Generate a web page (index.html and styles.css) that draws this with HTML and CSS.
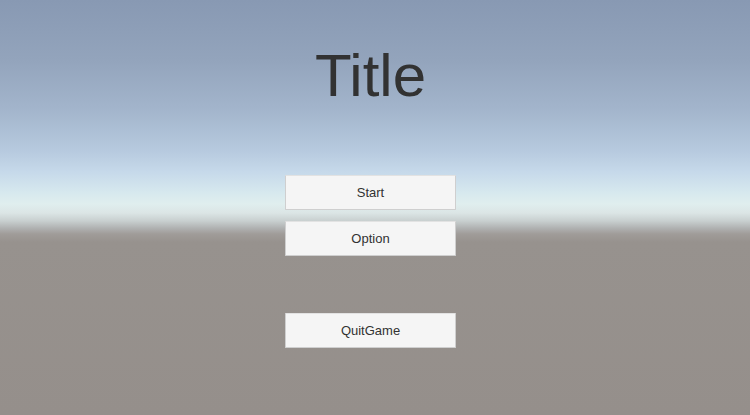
FILE: index.html
```html
<!DOCTYPE html>
<html>
<head>
<meta charset="utf-8">
<link rel="stylesheet" href="styles.css">
</head>
<body>
<div class="scene">
  <div class="menu">
    <div class="title">Title</div>
    <div class="buttons">
      <button class="btn">Start</button>
      <button class="btn btn-gap">Option</button>
      <button class="btn btn-quit">QuitGame</button>
    </div>
  </div>
</div>
</body>
</html>
```
FILE: styles.css
```css
html, body {
  margin: 0;
  padding: 0;
  width: 750px;
  height: 415px;
  overflow: hidden;
}
.scene {
  width: 750px;
  height: 415px;
  background: linear-gradient(to bottom,
    #8899b3 0px,
    #93a4bc 60px,
    #a3b5cc 110px,
    #b6c9de 150px,
    #c6d9ea 172px,
    #d6e8ee 192px,
    #e0eeee 204px,
    #dbe5e5 213px,
    #c8cfcf 221px,
    #b0b2b2 228px,
    #a09c99 234px,
    #97928e 242px,
    #958f8b 415px);
  font-family: "Liberation Sans", Arial, sans-serif;
  color: #323232;
}
.menu {
  display: flex;
  flex-direction: column;
  align-items: center;
  padding-right: 9px;
}
.title {
  margin-top: 41px;
  font-size: 60px;
  line-height: 70px;
  height: 70px;
}
.buttons {
  display: flex;
  flex-direction: column;
  margin-top: 64px;
}
.btn {
  width: 171px;
  height: 35px;
  background: #f5f5f5;
  border: 1px solid #cfcfcf;
  border-top-color: #e2e2e2;
  border-radius: 1px;
  font-family: "Liberation Sans", Arial, sans-serif;
  font-size: 13px;
  color: #323232;
  padding: 0;
  margin: 0;
}
.btn-gap {
  margin-top: 11px;
}
.btn-quit {
  margin-top: 57px;
}
```
